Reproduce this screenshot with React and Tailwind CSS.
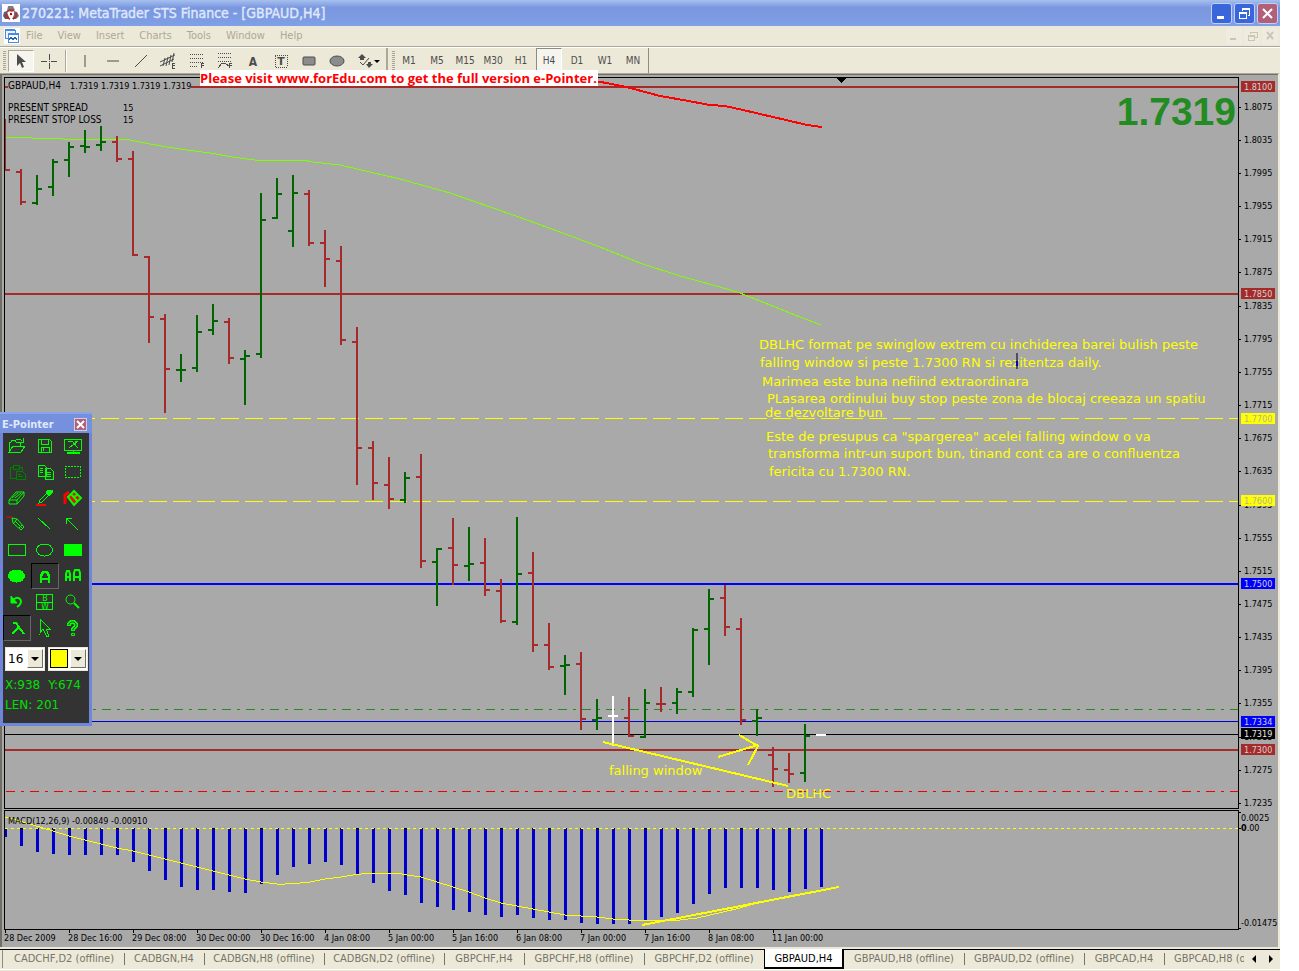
import React from "react";

const TAHOMA = "font-['DejaVu_Sans_Condensed','DejaVu_Sans',sans-serif]";

const RED = "#a52a2a";
const GREEN = "#006400";
const WHITE = "#ffffff";

// x, open, high, low, close, colour
const bars = [
  [5, null, 119, 171, 170, RED],
  [21, 172, 169, 205, 202, RED],
  [37, 203, 175, 205, 189, GREEN],
  [53, 187, 159, 196, 162, GREEN],
  [69, 160, 142, 177, 147, GREEN],
  [85, 146, 130, 153, 147, GREEN],
  [101, 145, 126, 151, 142, GREEN],
  [117, 142, 136, 162, 159, RED],
  [133, 159, 151, 256, 255, RED],
  [149, 257, 256, 343, 317, RED],
  [165, 319, 314, 413, 369, RED],
  [181, 370, 354, 382, 370, GREEN],
  [197, 368, 315, 372, 332, GREEN],
  [213, 330, 304, 335, 321, GREEN],
  [229, 322, 318, 364, 358, RED],
  [245, 359, 350, 405, 356, GREEN],
  [261, 354, 193, 358, 220, GREEN],
  [277, 218, 178, 219, 194, GREEN],
  [293, 231, 175, 247, 193, GREEN],
  [309, 194, 190, 246, 243, RED],
  [325, 243, 230, 287, 259, RED],
  [341, 261, 246, 345, 340, RED],
  [357, 342, 327, 485, 448, RED],
  [373, 448, 441, 500, 483, RED],
  [389, 485, 457, 509, 499, RED],
  [405, 500, 472, 503, 478, GREEN],
  [421, 477, 454, 568, 561, RED],
  [437, 562, 548, 606, 549, GREEN],
  [453, 548, 518, 585, 565, RED],
  [469, 566, 527, 581, 564, GREEN],
  [485, 563, 538, 596, 590, RED],
  [501, 591, 579, 623, 621, RED],
  [517, 622, 517, 625, 574, GREEN],
  [533, 573, 552, 652, 645, RED],
  [549, 645, 623, 670, 667, RED],
  [565, 666, 655, 695, 665, GREEN],
  [581, 664, 652, 730, 719, RED],
  [597, 720, 699, 730, 718, GREEN],
  [613, 716, 696, 746, 716, WHITE],
  [629, 718, 697, 737, 736, RED],
  [645, 737, 689, 738, 703, GREEN],
  [661, 704, 687, 712, 704, RED],
  [677, 703, 688, 714, 692, GREEN],
  [693, 692, 628, 697, 630, GREEN],
  [709, 629, 589, 665, 599, GREEN],
  [725, 598, 585, 636, 627, RED],
  [741, 629, 618, 725, 720, RED],
  [757, 721, 709, 736, 718, GREEN],
  [773, 755, 747, 787, 769, RED],
  [789, 770, 753, 783, 774, RED],
  [805, 773, 724, 782, 736, GREEN],
  [821, 735, 734, 736, 735, WHITE],
];

const macd = [
  837, 846, 852, 854, 855, 855, 855, 855, 862, 871, 880, 887, 890, 890, 892,
  893, 884, 875, 867, 864, 862, 865, 875, 883, 891, 895, 903, 907, 910, 912,
  915, 917, 915, 918, 920, 920, 923, 924, 924, 924, 920, 917, 913, 904, 894,
  888, 888, 888, 890, 892, 889, 887,
];

const signal =
  "5,817 13,819 23,822 43,828 53,831 69,836 85,840 101,844 117,848 133,851 149,855 165,859 181,863 197,867 213,871 229,875 245,879 261,882 277,884 285,884 300,883 310,882 325,879 341,877 353,875 370,873 397,873 407,875 421,877 437,882 453,887 469,892 485,898 501,903 517,906 533,909 549,912 565,915 581,916 597,917 613,919 629,920 680,920 697,918 710,915 723,912 740,908 757,903 789,896 821,890";

const greenAverage =
  "5,137 30,137 32,138 61,138 63,139 125,139 135,141 150,144 167,147 187,150 210,153 233,157 247,159 255,160 302,160 313,162 340,165 357,169 400,179 450,193 516,216 560,232 600,247 640,263 680,276 720,287 740,293 770,305 800,317 821,325";

const redAverage =
  "590,80 617,85 630,88 660,96 683,100 710,105 725,106 743,110 773,117 807,125 822,127";

const priceToY = (p) => Math.round(87 + (1.81 - p) * 8287.5);
const priceTicks = Array.from({ length: 22 }, (_, i) => 1.8075 - i * 0.004);

const priceTags = [
  [1.81, RED, "#d3d3d3"],
  [1.785, RED, "#d3d3d3"],
  [1.77, "#ffff00", "#b4b4a0"],
  [1.76, "#ffff00", "#b4b4a0"],
  [1.75, "#0000ff", "#d3d3d3"],
  [1.7334, "#0000ff", "#d3d3d3"],
  [1.7319, "#000000", "#e8e8e8"],
  [1.73, RED, "#d3d3d3"],
];

const notes = [
  [759, 349, "DBLHC format pe swinglow extrem cu inchiderea barei bulish peste"],
  [760, 367, "falling window si peste 1.7300 RN si rezitentza daily."],
  [762, 386, "Marimea este buna nefiind extraordinara"],
  [767, 403, "PLasarea ordinului buy stop peste zona de blocaj creeaza un spatiu"],
  [765, 417, "de dezvoltare bun"],
  [766, 441, 'Este de presupus ca "spargerea" acelei falling window o va'],
  [768, 458, "transforma intr-un suport bun, tinand cont ca are o confluentza"],
  [769, 476, "fericita cu 1.7300 RN."],
  [609, 775, "falling window"],
  [786, 798, "DBLHC"],
];

const times = [
  "28 Dec 2009", "28 Dec 16:00", "29 Dec 08:00", "30 Dec 00:00", "30 Dec 16:00",
  "4 Jan 08:00", "5 Jan 00:00", "5 Jan 16:00", "6 Jan 08:00", "7 Jan 00:00",
  "7 Jan 16:00", "8 Jan 08:00", "11 Jan 00:00",
];

const tabs = [
  ["CADCHF,D2 (offline)", true], ["CADBGN,H4", false], ["CADBGN,H8 (offline)", true],
  ["CADBGN,D2 (offline)", true], ["GBPCHF,H4", false], ["GBPCHF,H8 (offline)", true],
  ["GBPCHF,D2 (offline)", true], ["GBPAUD,H4", false], ["GBPAUD,H8 (offline)", true],
  ["GBPAUD,D2 (offline)", true], ["GBPCAD,H4", false],
];

function TitleBar() {
  const btn =
    "flex h-[21px] w-[21px] items-center justify-center rounded-[3px] border border-[#c3d0f3]";
  return (
    <header className="flex h-[26px] items-center bg-linear-to-b from-[#a6c0ee] via-[#7a96df] via-30% to-[#7f9fe6] pl-[2px] pr-[2px]">
      <svg width="18" height="18" viewBox="0 0 18 18" aria-hidden="true">
        <rect width="18" height="18" fill="#fff" />
        <path d="M6 2 L11 2 L13 6 L10 8 L5 7 Z" fill="#7b7b86" />
        <path d="M2 8 L5 7 L6 11 L8 15 L3 15 L1 12 Z" fill="#5c5c70" />
        <path d="M12 7 L15 8 L17 12 L14 15 L10 15 L12 11 Z" fill="#6c6c7c" />
        <path d="M5 8 a5 5 0 0 1 7 -1 M14 9 a5 5 0 0 1 -3 6 M8 15 a5 5 0 0 1 -4 -5" stroke="#c22" strokeWidth="1.5" fill="none" />
        <circle cx="9" cy="10" r="2.2" fill="#fff" />
        <circle cx="9" cy="10" r="1.2" fill="#b00" />
      </svg>
      <h1 className="ml-[2px] flex-1 whitespace-nowrap font-['DejaVu_Sans_Condensed','DejaVu_Sans',sans-serif] text-[14px] leading-[18px] font-normal text-[#dfe8fb] [-webkit-text-stroke:0.4px_#dfe8fb]">
        270221: MetaTrader STS Finance - [GBPAUD,H4]
      </h1>
      <div className="flex gap-[2px]">
        <button aria-label="Minimize" className={btn + " bg-[#3a66dc]"}>
          <svg width="17" height="17" shapeRendering="crispEdges"><rect x="4" y="11" width="7" height="3" fill="#fff" /></svg>
        </button>
        <button aria-label="Restore" className={btn + " bg-[#3a66dc]"}>
          <svg width="17" height="17" shapeRendering="crispEdges" fill="#fff">
            <path d="M6 3h8v8h-2V10h1V5H7V6H6z M3 7h8v7H3z M4 9v4h6V9z" fillRule="evenodd" />
          </svg>
        </button>
        <button aria-label="Close" className={btn + " bg-[#b2607a]"}>
          <svg width="17" height="17" stroke="#fff" strokeWidth="2"><path d="M4 4l9 9M13 4l-9 9" /></svg>
        </button>
      </div>
    </header>
  );
}

function MenuBar() {
  return (
    <nav className="flex h-[20px] items-center pr-[2px] pl-[4px]">
      <svg width="16" height="16" viewBox="0 0 16 16" shapeRendering="crispEdges" aria-hidden="true">
        <rect width="16" height="16" fill="#fff" />
        <path d="M1 2h10v8H1z" fill="#eef4ff" stroke="#4a8ae0" />
        <rect x="1" y="1" width="10" height="2" fill="#4a8ae0" />
        <path d="M4 6h10v8H4z" fill="#fff" stroke="#4a8ae0" />
        <rect x="4" y="5" width="11" height="2" fill="#4a8ae0" />
        <path d="M5 12l2-3 2 3 2-3 2 3" stroke="#2a62b8" fill="none" />
      </svg>
      <ul className={"ml-[6px] flex flex-1 gap-[15px] text-[11px] leading-[16px] text-[#aca899] " + TAHOMA}>
        {["File", "View", "Insert", "Charts", "Tools", "Window", "Help"].map((m) => (
          <li key={m}><button>{m}</button></li>
        ))}
      </ul>
      <div className="flex gap-[2px]">
        <button aria-label="Minimize chart" className="h-4 w-4 bg-[#efecdf]">
          <svg width="16" height="16" shapeRendering="crispEdges"><rect x="4" y="10" width="6" height="2" fill="#c9c6b8" /></svg>
        </button>
        <button aria-label="Restore chart" className="h-4 w-4 bg-[#efecdf]">
          <svg width="16" height="16" shapeRendering="crispEdges" fill="none" stroke="#c9c6b8"><path d="M6 6V4h7v5h-2M4 7h6v5H4zM4 8h6" /></svg>
        </button>
        <button aria-label="Close chart" className="h-4 w-4 bg-[#efecdf]">
          <svg width="16" height="16" stroke="#c9c6b8" strokeWidth="2"><path d="M5 4l6 7M11 4l-6 7" /></svg>
        </button>
      </div>
    </nav>
  );
}

const tools = [
  ["Vertical line", <path key="p" d="M14 7v12" />],
  ["Horizontal line", <path key="p" d="M8 13h12" />],
  ["Trend line", <path key="p" d="M8 19L20 7" />],
  ["Equidistant channel", (
    <g key="g">
      <path d="M5 14L20 7M5 18L19 11M8 18L10 10M11 18L13 9M14 17L16 7M17 14L19 5" />
      <path d="M20 15h-3v5h3M17 17h3" shapeRendering="crispEdges" />
    </g>
  )],
  ["Fibonacci retracement", (
    <g key="g" shapeRendering="crispEdges">
      <path d="M7 6h14M7 10h14M7 14h14M7 18h8" strokeDasharray="1 1" />
      <path d="M21 15h-3v5M18 17h3" />
    </g>
  )],
  ["Fibonacci fan", (
    <g key="g" shapeRendering="crispEdges">
      <path d="M7 5h14M7 9h14M7 13h14" strokeDasharray="1 1" />
      <path d="M7 20l4-5h3l4 3M21 15h-3v5M18 17h3" />
    </g>
  )],
  ["Text", <text key="t" x="14" y="18" textAnchor="middle" fill="#4c4c4c" stroke="none" fontSize="12" fontWeight="bold" fontFamily="DejaVu Sans Condensed, sans-serif">A</text>],
  ["Text label", (
    <g key="g">
      <rect x="8" y="7" width="12" height="12" strokeDasharray="1 1" shapeRendering="crispEdges" />
      <text x="14" y="17" textAnchor="middle" fill="#4c4c4c" stroke="none" fontSize="11" fontWeight="bold" fontFamily="DejaVu Sans, sans-serif">T</text>
    </g>
  )],
  ["Rectangle", <rect key="r" x="8" y="9" width="12" height="8" rx="1" fill="#8c8c8c" />],
  ["Ellipse", <ellipse key="e" cx="14" cy="13" rx="7" ry="5" fill="#8c8c8c" />],
];

function Grip() {
  return (
    <svg width="4" height="20" className="shrink-0" shapeRendering="crispEdges" aria-hidden="true">
      <path d="M2 0v20" stroke="#a9a695" strokeWidth="3" strokeDasharray="1 1" />
    </svg>
  );
}

function Divider() {
  return <span className="mr-1 ml-[3px] h-[22px] w-[2px] border-l border-[#aca899] bg-white" />;
}

function Toolbar() {
  return (
    <div className="flex h-[25px] items-center">
      <div className="flex h-full items-center border-r-2 border-[#aca899] pr-px pl-[2px]">
        <Grip />
        <button aria-label="Cursor" className="ml-[2px] flex h-[22px] w-[26px] items-center justify-center border border-t-[#aca899] border-l-[#aca899] border-r-white border-b-white bg-[#f6f4ee]">
          <svg width="12" height="16" viewBox="0 0 12 16"><path d="M2 1v12l3-3 2 5 2-1-2-5h4z" fill="#4c4c4c" /></svg>
        </button>
        <button aria-label="Crosshair" className="h-[25px] w-[28px]">
          <svg width="28" height="25" stroke="#4c4c4c" shapeRendering="crispEdges"><path d="M15 6v6M15 15v6M7 13h6M17 13h6" /><path d="M15 13h1" /></svg>
        </button>
        <Divider />
        {tools.map(([name, icon]) => (
          <button key={name} aria-label={name} className="h-[25px] w-[28px]">
            <svg width="28" height="25" fill="none" stroke="#4c4c4c">{icon}</svg>
          </button>
        ))}
        <button aria-label="Arrows" className="h-[25px] w-[34px]">
          <svg width="34" height="25" fill="#4c4c4c">
            <path d="M7 10l4-4 4 4h-2v2h-4v-2z M15 16h2v-2h3v2h2l-4 4z" />
            <path d="M9 14l3 3 6-7" stroke="#4c4c4c" fill="none" />
            <path d="M23 12h6l-3 3z" fill="#000" />
          </svg>
        </button>
      </div>
      <div className={"flex h-full items-center border-r border-[#8f8c7e] pr-px pl-[3px] text-[10px] text-[#4c4c4c] " + TAHOMA}>
        <Grip />
        {["M1", "M5", "M15", "M30", "H1", "H4", "D1", "W1", "MN"].map((t) => (
          <button
            key={t}
            className={
              t === "H4"
                ? "mx-px h-[25px] w-[26px] border border-t-[#8f8c7e] border-l-[#8f8c7e] border-r-white border-b-white bg-[#f6f4ee]"
                : "h-[25px] w-[28px]"
            }
          >
            {t}
          </button>
        ))}
      </div>
    </div>
  );
}

function HLine({ y, color, thick, dash, from = 5 }) {
  return (
    <line x1={from} x2="110%" y1={thick ? y : y + 0.5} y2={thick ? y : y + 0.5} stroke={color} strokeWidth={thick ? 2 : 1} strokeDasharray={dash} />
  );
}

function PricePlot() {
  return (
    <svg className="block h-[730px] w-full" role="img" aria-label="GBPAUD H4 price chart">
      <g transform="translate(-5 -78)" shapeRendering="crispEdges">
        <HLine y={87} color={RED} thick />
        <HLine y={294} color={RED} thick />
        <HLine y={418} color="#ffff00" dash="18 6" />
        <HLine y={501} color="#ffff00" dash="18 6" />
        <HLine y={584} color="#0000ff" thick />
        <HLine y={709} color="#228b22" dash="9 6 3 6" from={6} />
        <HLine y={721} color="#0000d0" />
        <HLine y={734} color="#000000" />
        <HLine y={750} color={RED} thick />
        <HLine y={791} color="#ee0000" dash="9 6 3 6" from={6} />
        <polyline points={greenAverage} fill="none" stroke="#7fff00" />
        <polyline points={redAverage} fill="none" stroke="#ff0000" strokeWidth="2" />
        {bars.map(([x, o, h, l, c, color]) => (
          <g key={x} fill={color}>
            <rect x={x - 1} y={h} width="2" height={l - h} />
            {o !== null && <rect x={x - 5} y={o - 1} width="5" height="2" />}
            <rect x={x} y={c - 1} width="5" height="2" />
          </g>
        ))}
        <path d="M837 78h9l-4 5h-1z" fill="#000" />
        <g stroke="#ffff00" strokeWidth="2" fill="none">
          <path d="M603 742L788 786M718 757L758 745M739 735L758 746L748 765" />
        </g>
        <rect x="8" y="81" width="183" height="10" fill="#a9a9a9" />
      </g>
      <g transform="translate(-5 -78)" fontFamily="DejaVu Sans Condensed, DejaVu Sans, sans-serif" fontSize="10" fill="#000">
        <text x="8" y="89">GBPAUD,H4</text>
        {[70, 101, 132, 163].map((x) => (
          <text key={x} x={x} y="89" fontSize="9">1.7319</text>
        ))}
        <text x="8" y="111">PRESENT SPREAD</text>
        <text x="123" y="111" fontSize="9">15</text>
        <text x="8" y="123">PRESENT STOP LOSS</text>
        <text x="123" y="123" fontSize="9">15</text>
      </g>
      <g transform="translate(-5 -78)" fontFamily="DejaVu Sans, sans-serif" fontSize="13" fill="#ffff00">
        {notes.map(([x, y, t]) => (
          <text key={y} x={x} y={y}>{t}</text>
        ))}
        <rect x="1016" y="353" width="2" height="16" fill="#50505a" />
        <rect x="1016" y="361" width="2" height="5" fill="#0000c8" />
      </g>
      <text x="100%" y="47" dx="-2" textAnchor="end" fontFamily="Liberation Sans, Arial, sans-serif" fontWeight="bold" fontSize="39" fill="#228b22">1.7319</text>
    </svg>
  );
}

function PriceAxis() {
  return (
    <svg className="block h-[732px] w-[39px] shrink-0" aria-label="Price scale">
      <g transform="translate(0 -77)" fontFamily="DejaVu Sans Condensed, DejaVu Sans, sans-serif" fontSize="9">
        {priceTicks.map((p) => (
          <g key={p}>
            <rect y={priceToY(p) - 1} width="2" height="1" />
            <text x="5" y={priceToY(p) + 2}>{p.toFixed(4)}</text>
          </g>
        ))}
        {priceTags.map(([p, bg, fg]) => (
          <g key={p}>
            <rect x="2" y={priceToY(p) - 6} width="34" height="11" fill={bg} />
            <text x="5" y={priceToY(p) + 3} fill={fg}>{p.toFixed(4)}</text>
          </g>
        ))}
      </g>
    </svg>
  );
}

function MacdPlot() {
  return (
    <svg className="block h-[118px] w-full" role="img" aria-label="MACD indicator">
      <g transform="translate(-5 -811)">
        <g shapeRendering="crispEdges">
          {macd.map((bottom, i) => (
            <g key={i}>
              <rect x={4 + i * 16} y="828" width="3" height={bottom - 828} fill="#0000cd" />
              <rect x={4 + i * 16} y="828" width="3" height="1" fill="#000" />
            </g>
          ))}
          <HLine y={828} color="#ffff00" dash="3 3" />
          <polyline points={signal} fill="none" stroke="#ffff00" />
        </g>
        <path d="M642 925L839 887" stroke="#ffff00" strokeWidth="2" shapeRendering="crispEdges" />
        <text x="8" y="824" fontFamily="DejaVu Sans Condensed, DejaVu Sans, sans-serif" fontSize="9">MACD(12,26,9) -0.00849 -0.00910</text>
      </g>
    </svg>
  );
}

function MacdAxis() {
  return (
    <svg className="block h-[120px] w-[39px] shrink-0" aria-label="MACD scale" fontFamily="DejaVu Sans Condensed, DejaVu Sans, sans-serif" fontSize="9">
      <path d="M0 2h2M0 18h2M0 118h2" stroke="#000" shapeRendering="crispEdges" />
      <text x="2" y="11">0.0025</text>
      <text x="2" y="21"><tspan fontWeight="bold">0</tspan>.00</text>
      <text x="2" y="116" fontSize="9">-0.01475</text>
    </svg>
  );
}

function Chart() {
  return (
    <section className="flex flex-col border-t border-r-2 border-t-[#aca899] border-r-[#ece9d8] bg-[#a9a9a9]">
      <div className="flex flex-col border-t border-l-2 border-[#716f64] pt-[2px] pl-[2px]">
        <div className="flex">
          <div className="min-w-0 flex-1 border border-black"><PricePlot /></div>
          <PriceAxis />
        </div>
        <div className="mt-px flex">
          <div className="min-w-0 flex-1 border border-black"><MacdPlot /></div>
          <MacdAxis />
        </div>
        <ol className={"flex h-[17px] text-[9px] leading-[11px] text-black " + TAHOMA}>
          {times.map((t) => (
            <li key={t} className="w-16 shrink-0 whitespace-nowrap">
              <span className="ml-px block h-[3px] w-px bg-black" />
              {t}
            </li>
          ))}
        </ol>
      </div>
    </section>
  );
}

function ChartTabs() {
  return (
    <footer className="border-t-2 border-[#ece9d8] bg-[#ece9d8] pb-px">
      <div className={"flex h-[21px] items-start border-t border-b border-t-black border-b-white pl-[2px] text-[11px] text-[#77746a] " + TAHOMA}>
        <span className="h-[18px] w-[2px] border-l border-[#8f8c7e]" />
        {tabs.map(([name, wide]) => {
          const active = name === "GBPAUD,H4";
          return (
            <button
              key={name}
              className={
                (wide ? "w-[120px]" : "w-20") +
                " relative -mt-px shrink-0 whitespace-nowrap " +
                (active
                  ? "h-[20px] border border-t-0 border-r-2 border-b-2 border-black bg-white leading-[20px] text-black"
                  : "h-[19px] leading-[20px] after:absolute after:-right-px after:top-1 after:h-3 after:w-px after:bg-[#77746a]")
              }
            >
              {name}
            </button>
          );
        })}
        <button className="-mt-px h-[19px] min-w-0 flex-1 overflow-hidden pl-[10px] text-left leading-[20px] whitespace-nowrap">
          GBPCAD,H8 (offline)
        </button>
        <button aria-label="Scroll tabs left" className="h-[18px] w-4"><svg width="16" height="18"><path d="M12 5v8l-4-4z" /></svg></button>
        <button aria-label="Scroll tabs right" className="h-[18px] w-5"><svg width="16" height="18"><path d="M9 5v8l4-4z" /></svg></button>
      </div>
    </footer>
  );
}

const G = "#00ff00";
const panelIcons = [
  ["Open", <path key="0" d="M6 19V9h2l1-2h3l1 2h4v4M6 19l4-6h12l-4 6zM13 7q3-2 6 1M20 5v4h-4" />],
  ["Save", <g key="0"><path d="M7 6h11l2 2v11H7zM10 6v5h7V6M10 19v-5h8v5M12 15v3" /></g>],
  ["Screenshot", <g key="0"><path d="M5 6h17v11H5zM9 8h4l6 7M19 8l-9 7M16 8h3" /><path d="M8 19h12v1H8z" fill={G} /><path d="M14 17v2" /></g>],
  ["Paste", <path key="0" d="M10 8H7v11h6M16 8h3v4M10 6h6v4h-6zM13 12h6l3 3v5h-9zM15 15h3M15 17h5" stroke="#008000" />],
  ["Copy", <path key="0" d="M7 6h6l2 2v9H7zM9 9h3M9 11h3M9 13h3M14 9h5l3 3v8h-8zM16 13h4M16 15h4M16 17h4" />],
  ["Select area", <rect key="0" x="6" y="7" width="15" height="11" strokeDasharray="2 1" />],
  ["Eraser", <g key="0" shapeRendering="auto"><path d="M6 15l7-8h8l-7 8zM6 15v4h8v-4M14 19l7-8V7" /><path d="M9 13l6-5M12 13l6-5" /></g>],
  ["Color picker", <g key="0"><path d="M5 19h9v1H5z" stroke="#f00" fill="#f00" /><path d="M8 18l1-3 7-7 2 2-7 7z" /><path d="M15 7l3-2h3v3l-3 3z" fill={G} /></g>],
  ["Fill", <g key="0" shapeRendering="auto"><path d="M6 19V10l4-3" stroke="#f00" strokeWidth="3" /><path d="M9 12l6-6 7 7-7 7z" fill="#f00" /><path d="M9 12l6-6 7 7-7 7zM12 9l7 8M14 13l5-4" strokeWidth="2" /></g>],
  ["Pencil", <g key="0" shapeRendering="auto"><path d="M3 6h6" stroke="#f00" /><path d="M9 7l5 1 7 8-3 3-8-7zM11 12l3-4M16 17l3-3" /><path d="M12 10l7 7" /></g>],
  ["Line", <path key="0" d="M7 7l12 11" />],
  ["Arrow", <path key="0" d="M8 8l11 11M7 13V7h6" />],
  ["Rectangle", <rect key="0" x="5" y="7" width="17" height="11" />],
  ["Ellipse", <ellipse key="0" cx="13.5" cy="13" rx="8" ry="6" />],
  ["Filled rectangle", <rect key="0" x="5" y="7" width="17" height="11" fill={G} />],
  ["Filled ellipse", <ellipse key="0" cx="13.5" cy="13" rx="8" ry="6" fill={G} />],
  ["Text", <path key="0" d="M10 20v-7l2-4h4l2 4v7M10 16h8" strokeWidth="2.5" />],
  ["Font", <g key="0" shapeRendering="auto"><path d="M7 18v-7l1-3h2l1 3v7M7 14h4M15 18v-8l1-3h4l1 3v8M15 14h6" strokeWidth="2" /></g>],
  ["Undo", <g key="0" shapeRendering="auto"><path d="M10 11q4-4 7-1q3 4-3 8" strokeWidth="2" /><path d="M8 7v7h6z" fill={G} /></g>],
  ["Black and white board", (
    <g key="0">
      <path d="M5 5h16v15H5zM5 13h16" />
      <text x="14" y="12" textAnchor="middle" stroke="none" fill={G} fontSize="8" fontFamily="DejaVu Sans, sans-serif">B</text>
      <text x="14" y="20" textAnchor="middle" stroke="none" fill={G} fontSize="8" fontFamily="DejaVu Sans, sans-serif">W</text>
    </g>
  )],
  ["Zoom", <g key="0" shapeRendering="auto"><circle cx="11.5" cy="10.5" r="4.5" /><path d="M15 14l5 5" strokeWidth="2" /></g>],
  ["Pin panel", <path key="0" d="M10 8h3l8 11M15 13l-6 6" strokeWidth="2" />],
  ["Pointer", <path key="0" d="M9 4v14l3-4 4 8 2-1-3-7h4z" />],
  ["Help", <g key="0" shapeRendering="auto"><path d="M10 11V9l2-2h3l2 2v2l-3 3v2" strokeWidth="4" /><path d="M10 10V9l2-2h3l2 2v2l-3 3v1" stroke="#333" /><path d="M12.5 18.5h3v2h-3z" /></g>],
];

function PointerPanel() {
  const arrow = (
    <span className="pointer-events-none absolute top-[2px] right-[2px] flex h-[19px] w-[16px] items-center justify-center border border-t-white border-l-white border-r-[#716f64] border-b-[#716f64] bg-[#ece9d8]">
      <svg width="8" height="4"><path d="M0 0h8l-4 4z" /></svg>
    </span>
  );
  return (
    <aside className="absolute top-[412px] left-0 w-[92px] border-r-[3px] border-b-[3px] border-l-[3px] border-[#6f86d8] bg-[#333]">
      <div className="-mx-[3px] flex h-[21px] items-center justify-between border-t-2 border-[#86a4ea] bg-[#7590dc] pt-[2px] pr-[5px] pl-[2px]">
        <h2 className="text-[11px] leading-[16px] font-bold text-[#dfe8fb] font-['DejaVu_Sans_Condensed','DejaVu_Sans',sans-serif]">E-Pointer</h2>
        <button aria-label="Close E-Pointer" className="flex h-[13px] w-[13px] items-center justify-center border border-[#d3cde4] bg-[#b0607c]">
          <svg width="9" height="9" stroke="#fff" strokeWidth="2"><path d="M1 1l7 7M8 1l-7 7" /></svg>
        </button>
      </div>
      <div className="grid grid-cols-[28px_28px_28px]">
        {panelIcons.map(([name, icon], i) => (
          <button
            key={name}
            aria-label={name}
            className={
              "h-[26px] w-[28px] border " +
              (i === 16 || i === 21
                ? "border-t-black border-l-black border-r-[#666] border-b-[#666]"
                : "border-transparent")
            }
          >
            <svg width="28" height="26" className="-m-px block" fill="none" stroke={G} shapeRendering="crispEdges">{icon}</svg>
          </button>
        ))}
      </div>
      <div className="mt-[6px] flex gap-[3px] pl-[2px]">
        <label className="relative block">
          <span className="sr-only">Size</span>
          <select defaultValue="16" className="block h-[24px] w-[40px] appearance-none border border-[#ece9d8] bg-white p-0 pl-[2px] text-[12px] leading-[20px] text-black font-['DejaVu_Sans',sans-serif]">
            <option>16</option>
            <option>18</option>
          </select>
          {arrow}
        </label>
        <label className="relative block">
          <span className="sr-only">Color</span>
          <select defaultValue="Yellow" className="block h-[24px] w-[40px] appearance-none border border-[#ece9d8] bg-white p-0 text-[8px] leading-[20px] text-transparent">
            <option>Yellow</option>
            <option>Red</option>
          </select>
          <span className="pointer-events-none absolute top-[2px] left-[2px] h-[19px] w-[18px] border border-black bg-[#ffff00]" />
          {arrow}
        </label>
      </div>
      <dl className="px-[2px] pt-[4px] pb-[8px] text-[12px] leading-[20px] text-[#00e000] font-['DejaVu_Sans',sans-serif]">
        <div className="flex gap-[8px]">
          <div className="flex"><dt>X:</dt><dd>938</dd></div>
          <div className="flex"><dt>Y:</dt><dd>674</dd></div>
        </div>
        <div className="flex gap-[4px]"><dt>LEN:</dt><dd>201</dd></div>
      </dl>
    </aside>
  );
}

export default function App() {
  return (
    <div className="min-h-screen bg-white pr-[19px]">
      <div className="relative flex flex-col overflow-hidden bg-[#ece9d8]">
        <TitleBar />
        <MenuBar />
        <div className="h-[2px] border-t border-[#aca899] bg-white" />
        <Toolbar />
        <Chart />
        <ChartTabs />
        <PointerPanel />
        <p className="absolute top-[70px] left-[200px] bg-white pr-px font-['Open_Sans',sans-serif] text-[13px] leading-[16px] font-bold whitespace-nowrap text-[#ff0000]">
          Please visit www.forEdu.com to get the full version e-Pointer.
        </p>
      </div>
    </div>
  );
}
